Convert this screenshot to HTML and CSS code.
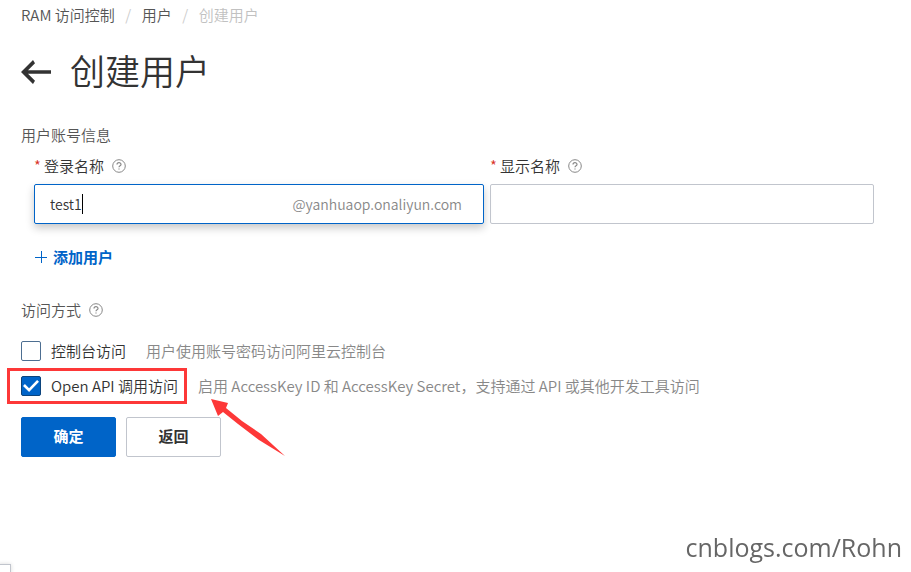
FILE: index.html
```html
<!DOCTYPE html>
<html lang="zh-CN">
<head>
<meta charset="utf-8">
<title>创建用户</title>
<link rel="stylesheet" href="styles.css">
</head>
<body>
<svg class="defs" aria-hidden="true">
  <symbol id="help" viewBox="0 0 14 14">
    <circle cx="7" cy="7" r="6.3" fill="none" stroke="currentColor"/>
    <path d="M5 5.6C5 3 9 3 9 5.5C9 6.9 7 6.8 7 8.3M7 9.4V10.6" fill="none" stroke="currentColor" stroke-width="1.2"/>
  </symbol>
</svg>
<main class="page">
  <nav class="breadcrumb" aria-label="breadcrumb">
    <a href="#">RAM 访问控制</a><span class="sep">/</span><a href="#">用户</a><span class="sep">/</span><span class="current">创建用户</span>
  </nav>
  <header class="heading">
    <a href="#" class="back" aria-label="返回">
      <svg width="30" height="24" viewBox="0 0 30 24"><path d="M0 12L12 0L14 3.2L7 10.2H30V13.8H7L14 20.8L12 24Z" fill="#333"/></svg>
    </a>
    <h1>创建用户</h1>
  </header>
  <form>
    <h2 class="section-title">用户账号信息</h2>
    <div class="fields">
      <div class="field">
        <div class="field-label"><span class="required">*</span><label for="login">登录名称</label><svg class="help"><use href="#help"/></svg></div>
        <div class="box focused">
          <input class="login" id="login" type="text" value="test1"><span class="caret"></span>
          <span class="suffix">@yanhuaop.onaliyun.com</span>
        </div>
      </div>
      <div class="field">
        <div class="field-label"><span class="required">*</span><label for="display">显示名称</label><svg class="help"><use href="#help"/></svg></div>
        <div class="box"><input class="display" id="display" type="text"></div>
      </div>
    </div>
    <button type="button" class="add"><svg width="12" height="12" viewBox="0 0 12 12"><path d="M0 6.5H12M6.5 0V12" stroke="currentColor" fill="none"/></svg>添加用户</button>
    <h2 class="section-title access">访问方式<svg class="help"><use href="#help"/></svg></h2>
    <div class="option">
      <label class="choice"><input type="checkbox">控制台访问</label>
      <span class="hint">用户使用账号密码访问阿里云控制台</span>
    </div>
    <div class="option">
      <label class="choice marked"><input type="checkbox" checked>Open API 调用访问</label>
      <span class="hint pointed">启用 AccessKey ID 和 AccessKey Secret，支持通过 API 或其他开发工具访问
        <svg class="arrow" width="74" height="58" viewBox="0 0 74 58"><path d="M0 0L17 4L15 9L31 22L50 35L74 57L48 41L27 25L12 13L7 17Z" fill="#fd3838"/></svg>
      </span>
    </div>
    <div class="actions">
      <button type="submit" class="btn primary">确定</button>
      <button type="button" class="btn">返回</button>
    </div>
  </form>
</main>
<div class="corner"></div>
<div class="watermark">cnblogs.com/Rohn</div>
</body>
</html>
```
FILE: styles.css
```css
* { box-sizing: border-box; }
body {
  margin: 0;
  min-height: 100vh;
  background: #fff;
  color: #333;
  font-family: "Noto Sans CJK SC", sans-serif;
  font-size: 15px;
  line-height: 20px;
  font-weight: 350;
}
a { color: inherit; text-decoration: none; }
button, input { font: inherit; color: inherit; }
.defs { position: absolute; width: 0; height: 0; }
.page { padding: 5px 37px 0 21px; }
.breadcrumb { display: flex; color: #555; }
.sep { width: 27px; text-align: center; color: #ccc; }
.current { color: #c1c1c1; }
.heading { display: flex; align-items: center; gap: 19px; margin-top: 23px; }
.back { display: flex; }
h1 { margin: 0; padding-bottom: 4px; font-size: 35px; line-height: 44px; font-weight: 350; }
.section-title { display: flex; align-items: center; margin: 0; font-size: 15px; font-weight: 350; color: #555; }
form .section-title:first-child { margin-top: 29px; }
.fields { display: grid; grid-template-columns: 450fr 384fr; gap: 6px; margin: 11px 0 0 13px; }
.field-label { display: flex; align-items: center; margin-bottom: 8px; }
.required { width: 10px; color: #d93026; }
.help { width: 14px; height: 14px; margin-left: 8px; color: #888; }
.box {
  display: flex;
  align-items: center;
  height: 40px;
  padding: 0 21px 0 15px;
  border: 1px solid #c1c5cd;
  border-radius: 2px;
}
.focused { border-color: #0064c8; box-shadow: 0 4px 8px rgba(0, 0, 0, .22); }
.box input { padding: 0; border: 0; outline: 0; background: none; font-size: 14px; }
.login { field-sizing: content; }
.display { width: 100%; }
.caret { width: 1px; height: 20px; background: #000; }
.suffix { margin-left: auto; color: #888; font-size: 14px; }
.add {
  display: flex;
  align-items: center;
  gap: 6px;
  margin: 23px 0 0 14px;
  padding: 0;
  border: 0;
  background: none;
  color: #0064c8;
  font-weight: 700;
}
.access { margin: 33px 0 21px; }
.option { display: flex; align-items: center; margin-top: 15px; }
.access + .option { margin-top: 0; }
.choice { position: relative; display: flex; align-items: center; gap: 10px; }
.choice input {
  appearance: none;
  width: 20px;
  height: 20px;
  margin: 0;
  border: 1px solid #4d6e91;
  border-radius: 2px;
  background: #fff;
}
.choice input:checked { display: grid; place-items: center; border-color: #0c447c; background: #0064c8; }
.choice input:checked::before {
  content: "";
  width: 16px;
  height: 12px;
  background: #fff;
  clip-path: polygon(0 50%, 12% 34%, 38% 68%, 88% 0, 100% 14%, 38% 100%);
}
.marked::after {
  content: "";
  position: absolute;
  inset: -8px -9px -8px -14px;
  border: 3px solid #fd3838;
}
.hint { margin-left: 20px; color: #888; }
.pointed { position: relative; }
.arrow { position: absolute; left: 13px; top: 23px; }
.actions { display: flex; gap: 10px; margin-top: 21px; }
.btn {
  width: 95px;
  height: 40px;
  padding: 0 0 3px;
  border: 1px solid #c1c5cd;
  border-radius: 2px;
  background: #fff;
  font-weight: 700;
}
.primary { border-color: #0064c8; background: #0064c8; color: #fff; }
.corner {
  position: fixed;
  left: -2px;
  bottom: -2px;
  width: 13px;
  height: 10px;
  border: 1px solid #c1c5cd;
  box-shadow: 0 0 4px rgba(0, 0, 0, .15);
}
.watermark {
  position: fixed;
  right: 9px;
  bottom: 7px;
  color: #666;
  font-family: "Open Sans", sans-serif;
  font-size: 25px;
  line-height: 36px;
  font-weight: 400;
}
```
